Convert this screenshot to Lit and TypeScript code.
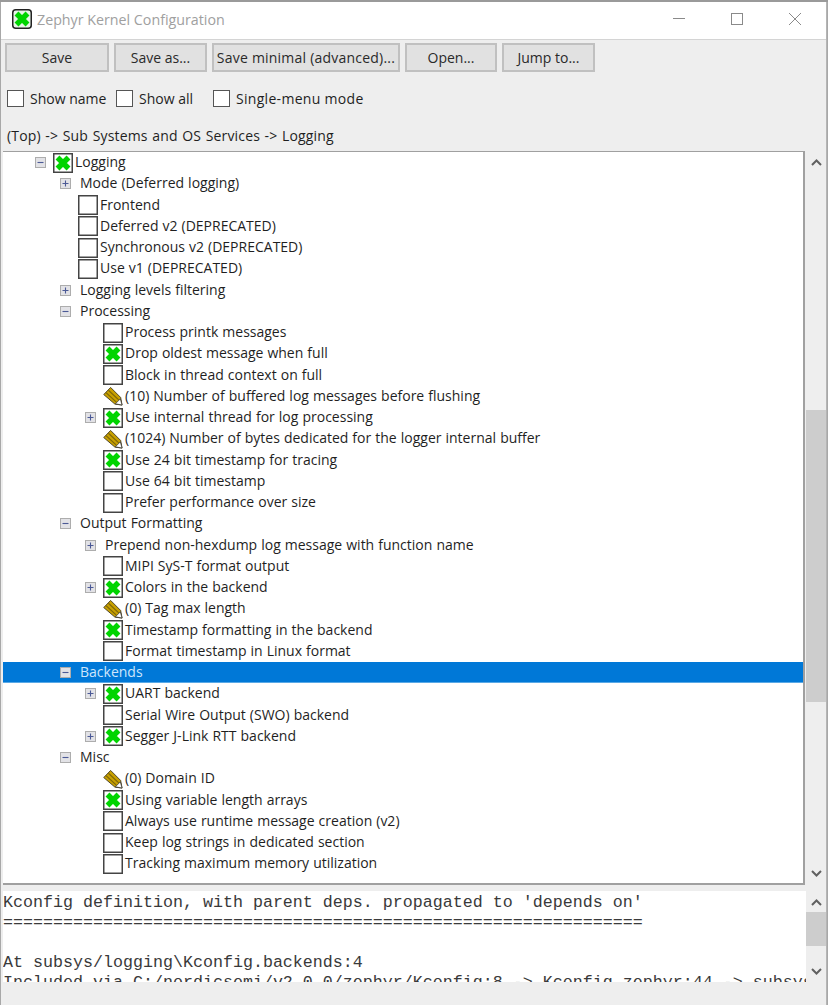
import { LitElement, html, css, svg } from "lit";
import { customElement } from "lit/decorators.js";

type Row = { t: string; l: number; k?: "on" | "off" | "pen"; tg?: "+" | "-"; sel?: boolean };

const rows: Row[] = [
  { t: "Logging", l: 0, k: "on", tg: "-" },
  { t: "Mode (Deferred logging)", l: 1, tg: "+" },
  { t: "Frontend", l: 1, k: "off" },
  { t: "Deferred v2 (DEPRECATED)", l: 1, k: "off" },
  { t: "Synchronous v2 (DEPRECATED)", l: 1, k: "off" },
  { t: "Use v1 (DEPRECATED)", l: 1, k: "off" },
  { t: "Logging levels filtering", l: 1, tg: "+" },
  { t: "Processing", l: 1, tg: "-" },
  { t: "Process printk messages", l: 2, k: "off" },
  { t: "Drop oldest message when full", l: 2, k: "on" },
  { t: "Block in thread context on full", l: 2, k: "off" },
  { t: "(10) Number of buffered log messages before flushing", l: 2, k: "pen" },
  { t: "Use internal thread for log processing", l: 2, k: "on", tg: "+" },
  { t: "(1024) Number of bytes dedicated for the logger internal buffer", l: 2, k: "pen" },
  { t: "Use 24 bit timestamp for tracing", l: 2, k: "on" },
  { t: "Use 64 bit timestamp", l: 2, k: "off" },
  { t: "Prefer performance over size", l: 2, k: "off" },
  { t: "Output Formatting", l: 1, tg: "-" },
  { t: "Prepend non-hexdump log message with function name", l: 2, tg: "+" },
  { t: "MIPI SyS-T format output", l: 2, k: "off" },
  { t: "Colors in the backend", l: 2, k: "on", tg: "+" },
  { t: "(0) Tag max length", l: 2, k: "pen" },
  { t: "Timestamp formatting in the backend", l: 2, k: "on" },
  { t: "Format timestamp in Linux format", l: 2, k: "off" },
  { t: "Backends", l: 1, tg: "-", sel: true },
  { t: "UART backend", l: 2, k: "on", tg: "+" },
  { t: "Serial Wire Output (SWO) backend", l: 2, k: "off" },
  { t: "Segger J-Link RTT backend", l: 2, k: "on", tg: "+" },
  { t: "Misc", l: 1, tg: "-" },
  { t: "(0) Domain ID", l: 2, k: "pen" },
  { t: "Using variable length arrays", l: 2, k: "on" },
  { t: "Always use runtime message creation (v2)", l: 2, k: "off" },
  { t: "Keep log strings in dedicated section", l: 2, k: "off" },
  { t: "Tracking maximum memory utilization", l: 2, k: "off" },
];

const cross = svg`<path d="M4.500 4.500 L15.500 15.500 M15.500 4.500 L4.500 15.500" stroke="#00d400" stroke-width="5.500" fill="none"/>`;

const checkIcon = (on: boolean) => html`<svg class="ico" width="20" height="20" viewBox="0 0 20 20">
  <rect x="0.75" y="0.75" width="18.5" height="18.5" fill="#fff" stroke="#444" stroke-width="1.5"/>
  ${on ? cross : ""}
</svg>`;

const penIcon = html`<svg class="ico" width="20" height="20" viewBox="0 0 21 21">
  <path d="M0.800 9 L8 1.500 L18.500 12 L20 20 L12.500 19 Z" fill="#c8a000" stroke="#4a4020" stroke-width="1" stroke-linejoin="round"/>
  <path d="M3.200 7 L14 17 M5.700 4.500 L16.500 14.500" stroke="#7d6608" stroke-width="1.2" fill="none"/>
  <path d="M13 18.700 L18.200 13.500 L20 20 Z" fill="#fff" stroke="#333" stroke-width="0.8"/>
</svg>`;

const toggle = (kind: "+" | "-") => html`<svg width="11" height="11" viewBox="0 0 11 11">
  <rect x="0.500" y="0.500" width="10" height="10" fill="#e2e2e6" stroke="#adadad"/>
  <path d="${kind === "+" ? "M2.500 5.500 H8.500 M5.500 2.500 V8.500" : "M2.500 5.500 H8.500"}" stroke="#4c5a96" stroke-width="1.100"/>
</svg>`;

@customElement("app-root")
export class AppRoot extends LitElement {
  static styles = css`
    :host { display: block; width: 828px; height: 1005px; overflow: hidden; background: #a8a8a8;
      font-family: "Open Sans", "Noto Sans", sans-serif; font-size: 14px; color: #1f1f1f; }
    .strip { height: 2px; background: #9a9a9a; }
    .window { height: 1003px; margin: 0 1px; background: #eee; border-right: 1px solid #b5b5b5; display: flex; flex-direction: column; }
    .title { height: 34px; padding: 0 0 3px 11px; background: #fff; border-bottom: 1px solid #d4d4d4; display: flex; align-items: center; flex: none; }
    .title .name { margin-left: 5px; color: #a0a0a0; font-size: 14.25px; }
    .ctl { margin-left: auto; display: flex; padding-right: 25px; gap: 46px; }
    .ctl svg { display: block; }
    .buttons { display: flex; gap: 5px; padding: 3px 0 0 4px; flex: none; }
    button { all: unset; box-sizing: border-box; height: 29px; background: #e1e1e1; border: 2px solid #c0c0c0; text-align: center; font: inherit; line-height: 23px; color: #2a2a2a; }
    .b-save { width: 104px; }
    .b-as { width: 93px; }
    .b-min { width: 188px; letter-spacing: 0.22px; }
    .b-open { width: 92px; }
    .b-jump { width: 93px; }
    .checks { display: flex; align-items: center; height: 17px; margin: 18px 0 0 6px; flex: none; }
    .cb { width: 17px; height: 17px; box-sizing: border-box; background: #fff; border: 1px solid #555; margin-right: 6px; flex: none; }
    .checks span { white-space: nowrap; }
    .w-name { width: 86px; }
    .w-all { width: 74px; }
    .w-single { letter-spacing: 0.3px; }
    .crumb { height: 20px; line-height: 20px; margin: 19px 0 0 6px; flex: none; word-spacing: 0.85px; letter-spacing: 0.15px; }
    .panel { display: flex; flex: none; padding-left: 2px; margin-top: 5px; height: 734px; }
    .tree { width: 802px; box-sizing: border-box; background: #fff; border: 1px solid #a0a0a0; border-width: 1px 2px 2px 0; overflow: hidden; word-spacing: 0.4px; }
    .row { height: 21.25px; display: flex; align-items: center; white-space: nowrap; box-sizing: border-box; }
    .row.sel { background: #0078d7; color: #cfe6fb; border-bottom: 1px solid #5aa9e6; }
    .lv0 { padding-left: 27px; }
    .lv1 { padding-left: 52px; }
    .lv2 { padding-left: 77px; }
    .tg { width: 20px; flex: none; display: flex; justify-content: center; align-items: center; }
    .ico { flex: none; margin-left: 3px; margin-right: 2px; }
    .label { margin-bottom: 2px; }
    .plain { margin-left: 5px; }
    .sb { width: 20px; flex: none; display: flex; flex-direction: column; align-items: stretch; background: #eee; margin-left: 1px; box-sizing: border-box; }
    .sb.a { padding: 3px 0; }
    .sb.b { margin-left: 0; padding: 3px 0 2px; }
    .arrow { height: 17px; display: flex; align-items: center; justify-content: center; flex: none; }
    .track { flex: 1; min-height: 0; }
    .t1 { flex: 0 0 239px; }
    .t2 { flex: 0 0 1px; }
    .thumb { background: #cdcdcd; }
    .th1 { height: 292px; }
    .th2 { height: 34px; }
    .info { display: flex; flex: none; padding-left: 2px; margin-top: 6px; height: 91px; }
    .text { width: 803px; box-sizing: border-box; padding-top: 1.5px; background: #fff; overflow: hidden; white-space: pre; font-family: "Liberation Mono", monospace; font-size: 16.67px; line-height: 20px; color: #3a3a3a; }
  `;

  private arrow(up: boolean) {
    return html`<div class="arrow"><svg width="11" height="7" viewBox="0 0 11 7">
      <path d="${up ? "M1 6 L5.500 1.500 L10 6" : "M1 1 L5.500 5.500 L10 1"}" fill="none" stroke="#606060" stroke-width="2"/>
    </svg></div>`;
  }

  private row(r: Row) {
    return html`<div class="row lv${r.l} ${r.sel ? "sel" : ""}">
      <span class="tg">${r.tg ? toggle(r.tg) : ""}</span>
      ${r.k === "pen" ? penIcon : r.k ? checkIcon(r.k === "on") : ""}
      <span class="label ${r.k ? "" : "plain"}">${r.t}</span>
    </div>`;
  }

  render() {
    return html`
      <div class="strip"></div>
      <div class="window">
        <div class="title">
          <svg width="20" height="20" viewBox="0 0 20 20">
            <rect x="0.750" y="0.750" width="18.5" height="18.5" rx="3" fill="#e8f5e8" stroke="#222" stroke-width="1.5"/>
            ${cross}
          </svg>
          <span class="name">Zephyr Kernel Configuration</span>
          <div class="ctl">
            <svg width="12" height="12" viewBox="0 0 12 12"><path d="M0 5.500 H12" stroke="#8a8a8a"/></svg>
            <svg width="12" height="12" viewBox="0 0 12 12"><rect x="0.500" y="0.500" width="11" height="11" fill="none" stroke="#8a8a8a"/></svg>
            <svg width="12" height="12" viewBox="0 0 12 12"><path d="M0 0 L12 12 M12 0 L0 12" stroke="#8a8a8a"/></svg>
          </div>
        </div>
        <div class="buttons">
          <button class="b-save">Save</button>
          <button class="b-as">Save as...</button>
          <button class="b-min">Save minimal (advanced)...</button>
          <button class="b-open">Open...</button>
          <button class="b-jump">Jump to...</button>
        </div>
        <div class="checks">
          <div class="cb"></div><span class="w-name">Show name</span>
          <div class="cb"></div><span class="w-all">Show all</span>
          <div class="cb"></div><span class="w-single">Single-menu mode</span>
        </div>
        <div class="crumb">(Top) -&gt; Sub Systems and OS Services -&gt; Logging</div>
        <div class="panel">
          <div class="tree">${rows.map((r) => this.row(r))}</div>
          <div class="sb a">
            ${this.arrow(true)}
            <div class="track t1"></div>
            <div class="thumb th1"></div>
            <div class="track"></div>
            ${this.arrow(false)}
          </div>
        </div>
        <div class="info">
          <div class="text">Kconfig definition, with parent deps. propagated to 'depends on'
================================================================

At subsys/logging\\Kconfig.backends:4
Included via C:/nordicsemi/v2.0.0/zephyr/Kconfig:8 -&gt; Kconfig.zephyr:44 -&gt; subsys/Kconfig</div>
          <div class="sb b">
            ${this.arrow(true)}
            <div class="track t2"></div>
            <div class="thumb th2"></div>
            <div class="track"></div>
            ${this.arrow(false)}
          </div>
        </div>
      </div>
    `;
  }
}
